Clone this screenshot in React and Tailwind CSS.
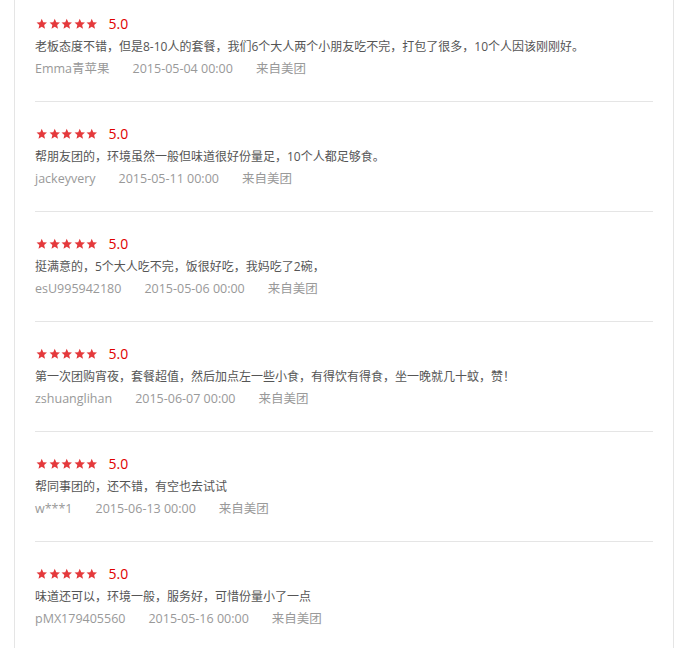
const reviews = [
  {
    text: '老板态度不错，但是8-10人的套餐，我们6个大人两个小朋友吃不完，打包了很多，10个人因该刚刚好。',
    user: 'Emma青苹果',
    date: '2015-05-04 00:00'
  },
  {
    text: '帮朋友团的，环境虽然一般但味道很好份量足，10个人都足够食。',
    user: 'jackeyvery',
    date: '2015-05-11 00:00'
  },
  {
    text: '挺满意的，5个大人吃不完，饭很好吃，我妈吃了2碗，',
    user: 'esU995942180',
    date: '2015-05-06 00:00'
  },
  {
    text: '第一次团购宵夜，套餐超值，然后加点左一些小食，有得饮有得食，坐一晚就几十蚊，赞！',
    user: 'zshuanglihan',
    date: '2015-06-07 00:00'
  },
  {
    text: '帮同事团的，还不错，有空也去试试',
    user: 'w***1',
    date: '2015-06-13 00:00'
  },
  {
    text: '味道还可以，环境一般，服务好，可惜份量小了一点',
    user: 'pMX179405560',
    date: '2015-05-16 00:00'
  }
]

function Star() {
  return (
    <svg viewBox="0 0 24 24" className="w-[11.5px] h-[11.5px]" fill="#e4393c">
      <path d="M12 1.5l3.1 7.2 7.8.7-5.9 5.2 1.8 7.7L12 18.2l-6.8 4.1 1.8-7.7-5.9-5.2 7.8-.7z" />
    </svg>
  )
}

export default function App() {
  return (
    <div
      className="min-h-screen bg-white"
      style={{ fontFamily: '"Open Sans", "Noto Sans CJK SC", sans-serif' }}
    >
      <div className="ml-[14px] w-[660px] border-x border-[#e5e5e5] min-h-[648px] pl-[20px] pr-[20px]">
        {reviews.map((r, i) => (
          <div
            key={i}
            className={`border-b border-[#e5e5e5] pb-[21px] ${i === 0 ? 'pt-[14px]' : 'pt-[22px]'}`}
          >
            <div className="h-5 flex items-center">
              <div className="flex gap-[1px] ml-px">
                <Star />
                <Star />
                <Star />
                <Star />
                <Star />
              </div>
              <span className="ml-[11px] text-[14px] text-[#e00000] leading-5">5.0</span>
            </div>
            <p className="mt-[2px] text-[12px] leading-[22px] text-[#555]">{r.text}</p>
            <div className="flex text-[12.5px] leading-[22px] text-[#999]">
              <span>{r.user}</span>
              <span className="ml-[23px]">{r.date}</span>
              <span className="ml-[23px]">来自美团</span>
            </div>
          </div>
        ))}
      </div>
    </div>
  )
}
